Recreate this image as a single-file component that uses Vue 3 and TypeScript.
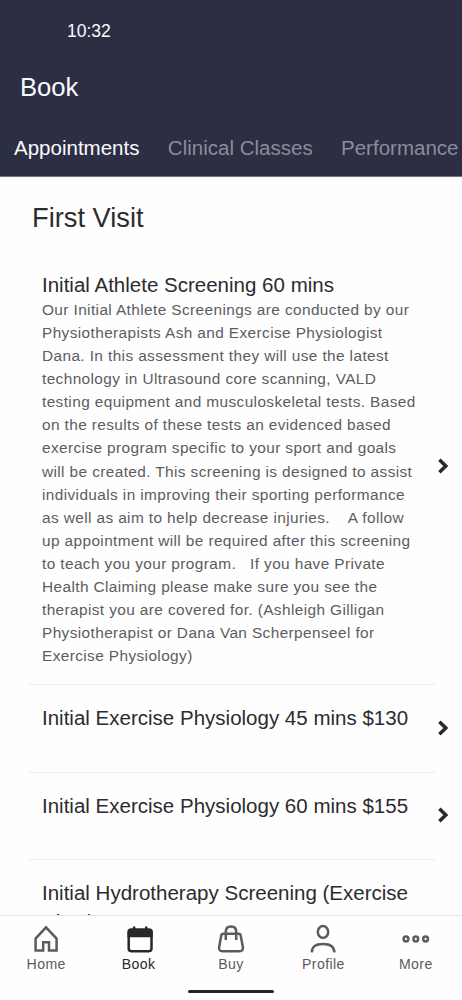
<script setup lang="ts">
interface Service {
  title: string
  description?: string
}

const tabs: string[] = ['Appointments', 'Clinical Classes', 'Performance']

const services: Service[] = [
  {
    title: 'Initial Athlete Screening 60 mins',
    description: [
      'Our Initial Athlete Screenings are conducted by our',
      'Physiotherapists Ash and Exercise Physiologist',
      'Dana. In this assessment they will use the latest',
      'technology in Ultrasound core scanning, VALD',
      'testing equipment and musculoskeletal tests. Based',
      'on the results of these tests an evidenced based',
      'exercise program specific to your sport and goals',
      'will be created. This screening is designed to assist',
      'individuals in improving their sporting performance',
      'as well as aim to help decrease injuries.    A follow',
      'up appointment will be required after this screening',
      'to teach you your program.   If you have Private',
      'Health Claiming please make sure you see the',
      'therapist you are covered for. (Ashleigh Gilligan',
      'Physiotherapist or Dana Van Scherpenseel for',
      'Exercise Physiology)',
    ].join('\n'),
  },
  { title: 'Initial Exercise Physiology 45 mins $130' },
  { title: 'Initial Exercise Physiology 60 mins $155' },
  { title: 'Initial Hydrotherapy Screening (Exercise\nPhys)' },
]
</script>

<template>
  <div class="screen">
    <header class="header">
      <div class="clock">10:32</div>
      <h1 class="page-title">Book</h1>
      <nav class="tabs">
        <span v-for="(tab, i) in tabs" :key="tab" class="tab" :class="{ active: i === 0 }">{{ tab }}</span>
      </nav>
    </header>

    <main class="content">
      <h2 class="section-title">First Visit</h2>
      <article v-for="service in services" :key="service.title" class="service">
        <div class="service-body">
          <h3 class="service-title">{{ service.title }}</h3>
          <p v-if="service.description" class="description">{{ service.description }}</p>
        </div>
        <svg class="chevron" width="12" height="16" viewBox="0 0 12 16">
          <path d="M2.4 1.8L8.8 8L2.4 14.2" />
        </svg>
      </article>
    </main>

    <footer class="footer">
      <nav class="nav">
        <div class="nav-item">
          <svg width="32" height="32" viewBox="0 0 32 32">
            <path d="M16 4.4L26.6 15.6V27.4H19V19.2H13.2V27.4H5.6V15.6Z" />
          </svg>
          <span>Home</span>
        </div>
        <div class="nav-item active">
          <svg width="32" height="32" viewBox="0 0 32 32">
            <rect x="5.7" y="6.8" width="22.8" height="21.4" rx="2.6" />
            <path class="solid" d="M4.5 14.2V8.8Q4.5 5.6 7.7 5.6H26.5Q29.7 5.6 29.7 8.8V14.2Z" />
            <path d="M11.1 3.6V7M23.2 3.6V7" />
          </svg>
          <span>Book</span>
        </div>
        <div class="nav-item">
          <svg width="32" height="32" viewBox="0 0 32 32">
            <path d="M8.4 10.8H23.6Q25.4 10.8 25.7 12.6L27.9 24.3Q28.3 28.2 24.6 28.2H7.4Q3.7 28.2 4.1 24.3L6.3 12.6Q6.6 10.8 8.4 10.8ZM10.8 17V8.6Q10.8 3.4 16 3.4Q21.2 3.4 21.2 8.6V17" />
          </svg>
          <span>Buy</span>
        </div>
        <div class="nav-item">
          <svg width="32" height="32" viewBox="0 0 32 32">
            <ellipse cx="16" cy="9" rx="5.2" ry="5.9" />
            <path d="M4.8 29.4C5 22.9 9 21 16 21S27.2 22.9 27.4 29.4" />
          </svg>
          <span>Profile</span>
        </div>
        <div class="nav-item">
          <svg width="32" height="32" viewBox="0 0 32 32">
            <circle cx="6" cy="16" r="2.4" />
            <circle cx="15.8" cy="16" r="2.4" />
            <circle cx="25.6" cy="16" r="2.4" />
          </svg>
          <span>More</span>
        </div>
      </nav>
      <div class="home-indicator"></div>
    </footer>
  </div>
</template>

<style>
body {
  margin: 0;
}
</style>

<style scoped>
.screen {
  display: flex;
  flex-direction: column;
  width: 462px;
  height: 1000px;
  overflow: hidden;
  background: #fefefe;
  color: #2d2b2e;
  font-family: "Liberation Sans", Arial, sans-serif;
}

h1,
h2,
h3,
p {
  margin: 0;
  font-weight: 400;
}

.header {
  box-sizing: border-box;
  flex: none;
  height: 177px;
  padding-top: 21px;
  overflow: hidden;
  background: #2c2e43;
  border-bottom: 1px solid #737483;
  color: #fafafe;
}

.clock {
  padding-left: 67px;
  font-size: 17.5px;
  line-height: 20px;
}

.page-title {
  margin-top: 31px;
  padding-left: 20px;
  font-size: 25.65px;
  line-height: 30px;
}

.tabs {
  display: flex;
  gap: 28.4px;
  margin-top: 34px;
  padding-left: 14px;
  font-size: 20.53px;
  line-height: 24px;
  white-space: nowrap;
}

.tab {
  color: #8b8c9b;
}

.tab.active {
  color: #fafafe;
}

.content {
  flex: 1;
  min-height: 0;
  overflow: hidden;
}

.section-title {
  height: 47px;
  padding: 25px 0 0 32px;
  font-size: 27.25px;
  line-height: 32px;
}

.service {
  display: flex;
  align-items: center;
  box-sizing: border-box;
  min-height: 87.5px;
  margin-left: 28px;
}

.service:nth-of-type(1) {
  height: 436px;
}

.service-body {
  box-sizing: border-box;
  flex: none;
  align-self: stretch;
  width: 408px;
  padding: 18px 0 0 14px;
  border-bottom: 1px solid #eeeeee;
}

.service:nth-of-type(4) .service-body {
  padding-bottom: 60px;
}

.service:nth-of-type(1) .service-body {
  padding-top: 20.5px;
}

.service-title {
  font-size: 20.53px;
  line-height: 29px;
  white-space: pre;
}

.description {
  margin-top: -0.5px;
  color: #5d5c60;
  font-size: 15.4px;
  line-height: 23.08px;
  letter-spacing: 0.39px;
  white-space: pre;
}

.chevron {
  flex: none;
  margin: 0 0 1.6px 1px;
}

.chevron path {
  fill: none;
  stroke: #29282a;
  stroke-width: 3.5;
}

.footer {
  box-sizing: border-box;
  flex: none;
  height: 85px;
  border-top: 1px solid #e5e5e6;
  background: #fefefe;
}

.nav {
  display: flex;
  height: 74px;
}

.nav-item {
  display: flex;
  flex: 1;
  flex-direction: column;
  align-items: center;
  padding-top: 7px;
  color: #5c5b5e;
  font-size: 14.1px;
  line-height: 18px;
  letter-spacing: 0.4px;
}

.nav-item.active {
  color: #29282b;
}

.nav-item svg {
  fill: none;
  stroke: currentColor;
  stroke-width: 2.5;
}

.nav-item svg .solid {
  fill: currentColor;
  stroke: none;
}

.home-indicator {
  width: 86px;
  height: 3px;
  margin: 0 auto;
  border-radius: 2px;
  background: #252426;
}
</style>
